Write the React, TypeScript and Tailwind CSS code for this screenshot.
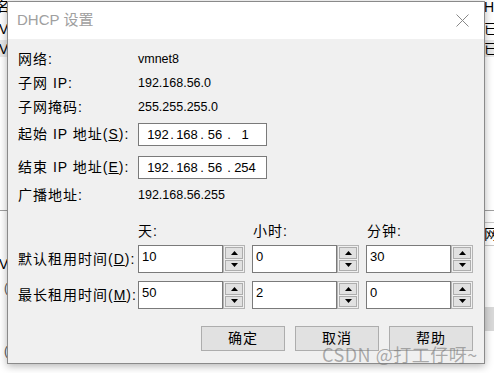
import React from 'react';

const FONT = "font-['Liberation_Sans','Noto_Sans_CJK_SC',sans-serif]";

function SpinBox({ value }: { value: string }) {
  return (
    <div className="flex h-[28px] w-[107px]">
      <div className="flex-1 border border-[#7a7a7a] bg-white pl-[3px] pt-[3px] text-[13px] leading-[16px] text-black">
        {value}
      </div>
      <div className="flex w-[22px] flex-col gap-px border border-[#b4b4b4] bg-[#f0f0f0] p-px">
        <div className="flex flex-1 items-center justify-center border border-[#adadad] bg-[#e1e1e1]">
          <svg width="7" height="4" viewBox="0 0 7 4">
            <path d="M0 4 L3.5 0 L7 4 Z" fill="#000" />
          </svg>
        </div>
        <div className="flex flex-1 items-center justify-center border border-[#adadad] bg-[#e1e1e1]">
          <svg width="7" height="4" viewBox="0 0 7 4">
            <path d="M0 0 L3.5 4 L7 0 Z" fill="#000" />
          </svg>
        </div>
      </div>
    </div>
  );
}

function IpBox({ parts }: { parts: string[] }) {
  return (
    <div className="flex h-[23px] w-[129px] items-center border border-[#7a7a7a] bg-white pl-[8px] text-[13px] text-black">
      <span className="w-[22px] text-center">{parts[0]}</span>
      <span className="w-[6px] text-center">.</span>
      <span className="w-[24px] text-center">{parts[1]}</span>
      <span className="w-[6px] text-center">.</span>
      <span className="w-[20px] text-center">{parts[2]}</span>
      <span className="w-[8px] text-center">.</span>
      <span className="w-[24px] text-center">{parts[3]}</span>
    </div>
  );
}

function Row({ label, value }: { label: React.ReactNode; value: string }) {
  return (
    <div className="flex h-[24px] items-center">
      <div className="w-[120px] text-[14px] tracking-[1px]">{label}</div>
      <div className="text-[12.5px]">{value}</div>
    </div>
  );
}

function Btn({ label }: { label: string }) {
  return (
    <div className="flex h-[25px] w-[84px] items-center justify-center border border-[#adadad] bg-[#e1e1e1] text-[14px] tracking-[1px]">
      {label}
    </div>
  );
}

export default function App() {
  return (
    <div className={`relative h-[373px] w-[494px] overflow-hidden bg-white ${FONT} text-[#000]`}>
      {/* window behind the dialog */}
      <div className="absolute left-0 top-[40px] h-[17px] w-[494px] bg-[#e8e8e8]" />
      <div className="absolute left-[-4px] top-[-4px] text-[14px]">名</div>
      <div className="absolute left-[-1px] top-[19px] text-[14px]">V</div>
      <div className="absolute left-[-1px] top-[39px] text-[14px]">V</div>
      <div className="absolute left-0 top-[210px] h-px w-[494px] bg-[#a0a0a0]" />
      <div className="absolute left-[-1px] top-[254px] text-[14px]">V</div>
      <div className="absolute left-[4px] top-[279px] text-[12px] text-[#555]">(</div>
      <div className="absolute left-[4px] top-[342px] text-[12px] text-[#555]">(</div>
      <div className="absolute left-[484px] top-[-3px] text-[14px]">HC</div>
      <div className="absolute left-[484px] top-[19px] text-[14px]">已</div>
      <div className="absolute left-[484px] top-[39px] text-[14px]">已</div>
      <div className="absolute left-[484px] top-[222px] h-[24px] w-[10px] border-y border-[#c8c8c8] text-[14px] leading-[22px]">网</div>
      <div className="absolute left-[484px] top-[307px] h-[24px] w-[10px] bg-[#d9d9d9]" />

      {/* dialog */}
      <div className="relative ml-[7px] mt-px flex h-[363px] w-[478px] flex-col border border-[#8a8a8a] bg-[#f0f0f0] shadow-[0_2px_8px_rgba(0,0,0,0.3)]">
        <div className="flex h-[37px] items-center justify-between bg-white pl-[9px] pr-[15px]">
          <span className="text-[15px] text-[#a0a0a0]">DHCP 设置</span>
          <svg width="13" height="13" viewBox="0 0 13 13">
            <path d="M0.5 0.5 L12.5 12.5 M12.5 0.5 L0.5 12.5" stroke="#888" strokeWidth="1" />
          </svg>
        </div>

        <div className="flex flex-col pl-[10px] pt-[8px]">
          <Row label="网络:" value="vmnet8" />
          <Row label="子网 IP:" value="192.168.56.0" />
          <Row label="子网掩码:" value="255.255.255.0" />

          <div className="mt-[4px] flex h-[23px] items-center">
            <div className="w-[120px] text-[14px] tracking-[1px]">
              起始 IP 地址(<span className="underline">S</span>):
            </div>
            <IpBox parts={['192', '168', '56', '1']} />
          </div>
          <div className="mt-[10px] flex h-[23px] items-center">
            <div className="w-[120px] text-[14px] tracking-[1px]">
              结束 IP 地址(<span className="underline">E</span>):
            </div>
            <IpBox parts={['192', '168', '56', '254']} />
          </div>
          <div className="mt-[4px]">
            <Row label="广播地址:" value="192.168.56.255" />
          </div>

          <div className="mt-[12px] flex h-[24px] items-center text-[14px] tracking-[1px]">
            <div className="w-[120px]" />
            <div className="w-[115px]">天:</div>
            <div className="w-[114px]">小时:</div>
            <div>分钟:</div>
          </div>
          <div className="mt-[2px] flex items-center">
            <div className="w-[120px] text-[14px] tracking-[1px]">
              默认租用时间(<span className="underline">D</span>):
            </div>
            <div className="flex gap-[7px]">
              <SpinBox value="10" />
              <SpinBox value="0" />
              <SpinBox value="30" />
            </div>
          </div>
          <div className="mt-[8px] flex items-center">
            <div className="w-[120px] text-[14px] tracking-[1px]">
              最长租用时间(<span className="underline">M</span>):
            </div>
            <div className="flex gap-[7px]">
              <SpinBox value="50" />
              <SpinBox value="2" />
              <SpinBox value="0" />
            </div>
          </div>

          <div className="mt-[17px] flex justify-end gap-[10px] pr-[11px]">
            <Btn label="确定" />
            <Btn label="取消" />
            <Btn label="帮助" />
          </div>
        </div>
      </div>

      <div className="absolute left-[322px] top-[341px] text-[18px] tracking-[0.5px] text-[rgba(120,120,120,0.6)] font-['Noto_Sans_CJK_SC',sans-serif]">
        CSDN @打工仔呀~
      </div>
    </div>
  );
}
